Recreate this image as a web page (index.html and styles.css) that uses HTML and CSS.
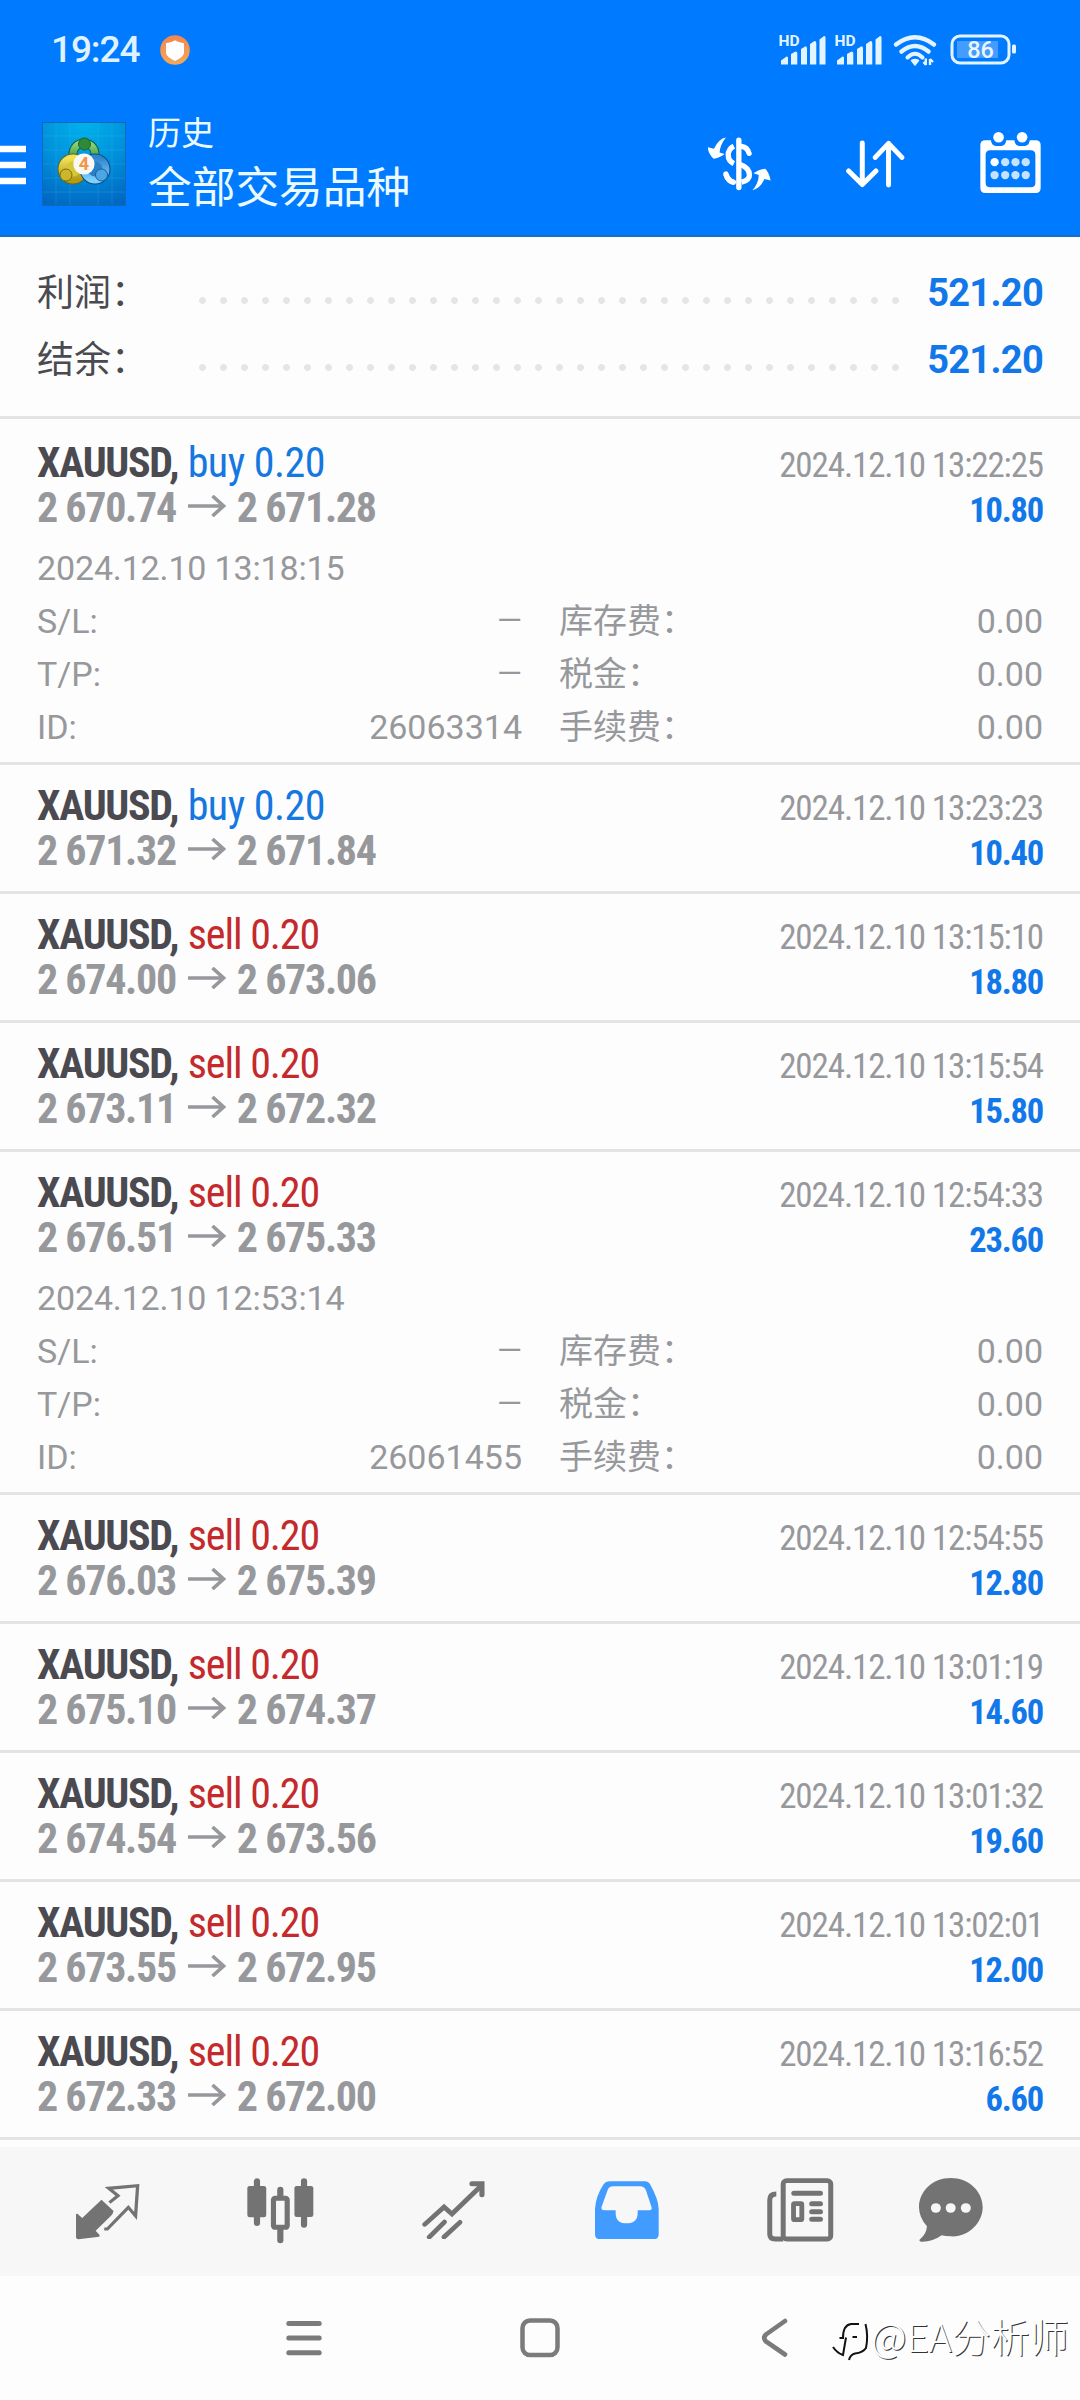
FILE: index.html
```html
<!DOCTYPE html>
<html lang="zh-CN">
<head>
<meta charset="utf-8">
<title>历史</title>
<link rel="stylesheet" href="styles.css">
</head>
<body>
<svg class="defs" aria-hidden="true">
  <symbol id="arrow" viewBox="0 0 38 22">
    <path d="M0 11H35M24.5 1L35.5 11L24.5 21" fill="none" stroke="currentColor" stroke-width="3.6"/>
  </symbol>
</svg>
<div class="screen">
  <header class="header">
    <div class="status">
      <span class="clock">19:24</span>
      <svg class="shield" viewBox="0 0 30 30">
        <defs><linearGradient id="og" x1="0" y1="0" x2="0" y2="1"><stop offset="0" stop-color="#f4854e"/><stop offset="1" stop-color="#f2a95a"/></linearGradient></defs>
        <circle cx="15" cy="15" r="14.8" fill="url(#og)"/>
        <path d="M15 5.2Q19 8 24 8.2V18Q23.500 22 15 26Q6.500 22 6 18V8.200Q11 8 15 5.200Z" fill="#fff"/>
      </svg>
      <svg class="indicators" viewBox="0 0 240 36">
        <g fill="#e3f4ff">
          <g id="sig">
            <text x="-.5" y="13.600" font-size="15.500" font-weight="700">HD</text>
            <path d="M2 28.500L7.500 24.500Q9 24.200 9 26V32.500H2ZM12 22L16.500 19.500Q18.300 19.500 18.300 21V32.500H12ZM22 17L26.500 14.200Q28 14.200 28 16V32.500H22ZM31 12L35.500 9Q37.300 9 37.300 11V32.500H31ZM40.500 7.500L45 4Q46.500 3.800 46.500 5.500V32.500H40.500Z"/>
          </g>
          <use href="#sig" x="56"/>
          <path d="M132.500 28.500Q136 26.500 139.500 28.500L136 33Z" stroke="#e3f4ff" stroke-width="1.500" stroke-linejoin="round"/>
          <path d="M146.800 26.500V33M144.500 30L147 33M151 33V27M151 27L154 30" fill="none" stroke="#e3f4ff" stroke-width="2.400"/>
          <rect x="178" y="9" width="41" height="17" fill="#459cff"/>
        </g>
        <g fill="none" stroke="#e3f4ff" stroke-width="4.500" stroke-linecap="round">
          <path d="M117 12.500Q136 -2 155 12.500M122.500 19.500Q136 8.500 149.500 19.500"/>
          <path d="M128.500 25.500Q136 18 143.500 25.500" stroke-width="4"/>
        </g>
        <rect x="173" y="4" width="57" height="27" rx="8" fill="none" stroke="#e3f4ff" stroke-width="3"/>
        <rect x="233" y="12.500" width="4" height="9" rx="1.500" fill="#e3f4ff"/>
        <text x="201.500" y="26" text-anchor="middle" font-size="23.500" font-weight="500" fill="#e9f6ff">86</text>
      </svg>
    </div>
    <div class="toolbar">
      <svg class="menu" viewBox="0 0 27 40"><path d="M0 4H26M0 20H26M0 36H26" stroke="#fff" stroke-width="6.600"/></svg>
      <svg class="logo" viewBox="0 0 84 84">
        <defs>
          <radialGradient id="bg" cx=".5" cy="0" r="1.050"><stop offset="0" stop-color="#00b2ec"/><stop offset=".5" stop-color="#0092dc"/><stop offset="1" stop-color="#0067c2"/></radialGradient>
          <linearGradient id="gr" x1="0" y1="0" x2="0" y2="1"><stop offset="0" stop-color="#8ed47a"/><stop offset="1" stop-color="#1d7f2c"/></linearGradient>
          <linearGradient id="ye" x1="0" y1="0" x2="0" y2="1"><stop offset="0" stop-color="#f1e25a"/><stop offset="1" stop-color="#b59a14"/></linearGradient>
          <linearGradient id="bl" x1="0" y1="0" x2="0" y2="1"><stop offset="0" stop-color="#2f86cc"/><stop offset="1" stop-color="#7fd0ff"/></linearGradient>
        </defs>
        <rect width="84" height="84" fill="url(#bg)"/>
        <path d="M14 0V84M28 0V84M56 0V84M70 0V84M0 14H84M0 28H84M0 42H84M0 56H84M0 70H84" stroke="#5cc8f5" stroke-opacity=".18"/>
        <rect x=".5" y=".5" width="83" height="83" fill="none" stroke="#1268b5"/>
        <circle cx="42" cy="32" r="11" fill="none" stroke="#145c3a" stroke-width="9"/>
        <circle cx="42" cy="32" r="11" fill="none" stroke="url(#gr)" stroke-width="7"/>
        <circle cx="31" cy="47" r="11" fill="none" stroke="#5d6a20" stroke-width="9"/>
        <circle cx="31" cy="47" r="11" fill="#d8c63a" stroke="url(#ye)" stroke-width="7"/>
        <circle cx="53" cy="47" r="11" fill="none" stroke="#0b4a86" stroke-width="9"/>
        <circle cx="53" cy="47" r="11" fill="#2a80c4" stroke="url(#bl)" stroke-width="7"/>
        <circle cx="42.500" cy="22" r="6" fill="#2e8a38" stroke="#1a6330"/>
        <circle cx="24" cy="53" r="6" fill="#cdb62a" stroke="#776c18"/>
        <circle cx="59.500" cy="53" r="6" fill="#4ba6e2" stroke="#1a5f9f"/>
        <circle cx="42" cy="42" r="10.600" fill="#f8f8f5"/>
        <text x="42" y="48.300" text-anchor="middle" font-size="18" font-weight="700" fill="#f29545">4</text>
      </svg>
      <div class="titles"><span class="title">历史</span><span class="subtitle">全部交易品种</span></div>
      <svg class="act-dollar" viewBox="145 410 190 162">
        <g fill="none" stroke="#fff" stroke-width="16" stroke-linecap="round">
          <path d="M238 419V562"/>
          <path d="M223 437Q206 446 206 464Q206 482 223 490M199 522Q205 542 223 546" stroke-linecap="butt"/>
          <path d="M246 438Q264 441 269 459M199 521Q205 542 222 546"/>
          <path d="M240 492Q270 502 270 524Q270 540 246 546" stroke-linecap="butt"/>
        </g>
        <path d="M199 411Q178 414 163 445L144 440Q146 462 162 475Q178 474 195 461L180 456Q182 432 199 411ZM279 570Q298 548 298 524L282 519Q300 506 318 505Q330 518 334 541L315 536Q304 564 279 570Z" fill="#fff"/>
      </svg>
      <svg class="act-sort" viewBox="558 418 176 144">
        <path d="M607 427V552M566 511L607 552L648 511M686 553V428M646 470L686 428L726 470" fill="none" stroke="#fff" stroke-width="15" stroke-linecap="round" stroke-linejoin="round"/>
      </svg>
      <svg class="act-cal" viewBox="960 395 182 184">
        <path fill="#fff" fill-rule="evenodd" d="M975 420H992Q993 435 1006 437H1024Q1037 435 1038 420H1063Q1064 435 1077 437H1095Q1108 435 1109 420H1127Q1142 420 1142 435V563Q1142 579 1127 579H975Q960 579 960 563V435Q960 420 975 420ZM990 450Q976 450 976 464V548Q976 562 990 562H1112Q1126 562 1126 548V464Q1126 450 1112 450Z"/>
        <circle cx="1015" cy="411" r="16" fill="#fff"/><circle cx="1086" cy="411" r="16" fill="#fff"/>
        <circle cx="1003" cy="486" r="12.500" fill="#fff"/>
        <g fill="#c5e2ff"><circle cx="1035" cy="486" r="12.500"/><circle cx="1066" cy="486" r="12.500"/><circle cx="1097" cy="486" r="12.500"/><circle cx="1003" cy="525" r="12.500"/><circle cx="1035" cy="525" r="12.500"/><circle cx="1066" cy="525" r="12.500"/><circle cx="1097" cy="525" r="12.500"/></g>
      </svg>
    </div>
  </header>

  <section class="summary">
    <div class="sum-row"><span class="sum-label">利润：</span><span class="dots"></span><span class="sum-value">521.20</span></div>
    <div class="sum-row"><span class="sum-label">结余：</span><span class="dots"></span><span class="sum-value">521.20</span></div>
  </section>

  <main class="deals">
    <article class="deal first">
      <div class="line"><span class="symbol">XAUUSD, <span class="buy">buy 0.20</span></span><time class="time">2024.12.10 13:22:25</time></div>
      <div class="line"><span class="price">2 670.74<svg class="arr"><use href="#arrow"/></svg>2 671.28</span><span class="profit">10.80</span></div>
      <div class="detail">
        <div class="opened">2024.12.10 13:18:15</div>
        <span>S/L:</span><span class="num none">—</span><span class="fee">库存费：</span><span class="num">0.00</span>
        <span>T/P:</span><span class="num none">—</span><span class="fee">税金：</span><span class="num">0.00</span>
        <span>ID:</span><span class="num">26063314</span><span class="fee">手续费：</span><span class="num">0.00</span>
      </div>
    </article>
    <article class="deal">
      <div class="line"><span class="symbol">XAUUSD, <span class="buy">buy 0.20</span></span><time class="time">2024.12.10 13:23:23</time></div>
      <div class="line"><span class="price">2 671.32<svg class="arr"><use href="#arrow"/></svg>2 671.84</span><span class="profit">10.40</span></div>
    </article>
    <article class="deal">
      <div class="line"><span class="symbol">XAUUSD, <span class="sell">sell 0.20</span></span><time class="time">2024.12.10 13:15:10</time></div>
      <div class="line"><span class="price">2 674.00<svg class="arr"><use href="#arrow"/></svg>2 673.06</span><span class="profit">18.80</span></div>
    </article>
    <article class="deal">
      <div class="line"><span class="symbol">XAUUSD, <span class="sell">sell 0.20</span></span><time class="time">2024.12.10 13:15:54</time></div>
      <div class="line"><span class="price">2 673.11<svg class="arr"><use href="#arrow"/></svg>2 672.32</span><span class="profit">15.80</span></div>
    </article>
    <article class="deal">
      <div class="line"><span class="symbol">XAUUSD, <span class="sell">sell 0.20</span></span><time class="time">2024.12.10 12:54:33</time></div>
      <div class="line"><span class="price">2 676.51<svg class="arr"><use href="#arrow"/></svg>2 675.33</span><span class="profit">23.60</span></div>
      <div class="detail">
        <div class="opened">2024.12.10 12:53:14</div>
        <span>S/L:</span><span class="num none">—</span><span class="fee">库存费：</span><span class="num">0.00</span>
        <span>T/P:</span><span class="num none">—</span><span class="fee">税金：</span><span class="num">0.00</span>
        <span>ID:</span><span class="num">26061455</span><span class="fee">手续费：</span><span class="num">0.00</span>
      </div>
    </article>
    <article class="deal">
      <div class="line"><span class="symbol">XAUUSD, <span class="sell">sell 0.20</span></span><time class="time">2024.12.10 12:54:55</time></div>
      <div class="line"><span class="price">2 676.03<svg class="arr"><use href="#arrow"/></svg>2 675.39</span><span class="profit">12.80</span></div>
    </article>
    <article class="deal">
      <div class="line"><span class="symbol">XAUUSD, <span class="sell">sell 0.20</span></span><time class="time">2024.12.10 13:01:19</time></div>
      <div class="line"><span class="price">2 675.10<svg class="arr"><use href="#arrow"/></svg>2 674.37</span><span class="profit">14.60</span></div>
    </article>
    <article class="deal">
      <div class="line"><span class="symbol">XAUUSD, <span class="sell">sell 0.20</span></span><time class="time">2024.12.10 13:01:32</time></div>
      <div class="line"><span class="price">2 674.54<svg class="arr"><use href="#arrow"/></svg>2 673.56</span><span class="profit">19.60</span></div>
    </article>
    <article class="deal">
      <div class="line"><span class="symbol">XAUUSD, <span class="sell">sell 0.20</span></span><time class="time">2024.12.10 13:02:01</time></div>
      <div class="line"><span class="price">2 673.55<svg class="arr"><use href="#arrow"/></svg>2 672.95</span><span class="profit">12.00</span></div>
    </article>
    <article class="deal">
      <div class="line"><span class="symbol">XAUUSD, <span class="sell">sell 0.20</span></span><time class="time">2024.12.10 13:16:52</time></div>
      <div class="line"><span class="price">2 672.33<svg class="arr"><use href="#arrow"/></svg>2 672.00</span><span class="profit">6.60</span></div>
    </article>
  </main>

  <nav class="tabs">
    <svg class="tab-quotes" viewBox="218 188 190 172" preserveAspectRatio="none">
      <path d="M295 238L330 272Q329 280 322 287L278 331L290 345L288 349L228 357Q221 357 221 350V281L225 280L239 293Z" fill="#737373"/>
      <path d="M318 247L343 226L316 204L400 196L394 287L373 261L312 326H303" fill="none" stroke="#737373" stroke-width="9.500"/>
    </svg>
    <svg class="tab-chart" viewBox="716 174 195 197" preserveAspectRatio="none">
      <g fill="#737373"><rect x="717" y="198" width="55" height="94" rx="7"/><rect x="736" y="175" width="18" height="143" rx="9"/><rect x="854" y="198" width="55" height="93" rx="7"/><rect x="873" y="175" width="18" height="148" rx="9"/><rect x="804" y="200" width="18" height="40" rx="9"/><rect x="804" y="320" width="18" height="50" rx="9"/></g>
      <rect x="793" y="235" width="40" height="87" rx="5" fill="none" stroke="#737373" stroke-width="15"/>
    </svg>
    <svg class="tab-trade" viewBox="1224 182 184 176" preserveAspectRatio="none">
      <path d="M1232 312L1288 260L1311 281L1395 197M1245 350L1289 305M1288 350L1334 306" fill="none" stroke="#737373" stroke-width="14" stroke-linecap="round"/>
      <path d="M1369 190H1398V223" fill="none" stroke="#737373" stroke-width="15" stroke-linecap="round"/>
    </svg>
    <svg class="tab-history" viewBox="161 182 185 176" preserveAspectRatio="none">
      <path fill="#429bff" fill-rule="evenodd" d="M202 183H306Q316 183 321 192Q345 236 346 265V341Q346 357 331 357H176Q161 357 161 341V265Q163 228 186 192Q192 183 202 183ZM214 198Q202 198 198 208L180 260Q178 270 187 270H221V278Q221 309 252 309Q285 309 285 278V270H320Q328 270 325 260L309 210Q304 198 292 198Z"/>
    </svg>
    <svg class="tab-news" viewBox="663 174 193 192" preserveAspectRatio="none">
      <g fill="none" stroke="#737373" stroke-width="14.500"><rect x="710" y="182" width="138" height="175" rx="10"/><path d="M690 222Q671 222 671 240V343Q671 357 687 357H710"/></g>
      <path d="M741 220H818M793 251H818M793 275H818M793 298H818" stroke="#737373" stroke-width="15" stroke-linecap="round"/>
      <rect x="740" y="251" width="24" height="48" rx="3" fill="none" stroke="#737373" stroke-width="14"/>
    </svg>
    <svg class="tab-chat" viewBox="1101 174 185 192" preserveAspectRatio="none">
      <path fill="#737373" d="M1193 174C1246 174 1286 214 1286 262C1286 310 1242 353 1193 349Q1178 349 1167 346Q1140 366 1108 365Q1099 363 1104 358Q1123 342 1124 319Q1101 292 1101 262C1101 214 1140 174 1193 174Z"/>
      <g fill="#f7f7f7"><circle cx="1150" cy="264" r="14.500"/><circle cx="1193" cy="264" r="14.500"/><circle cx="1237" cy="264" r="14.500"/></g>
    </svg>
  </nav>

  <footer class="sysnav">
    <svg class="sys" viewBox="0 0 40 40"><path d="M4.800 5.500H35.200M4.800 20H35.200M4.800 34.700H35.200" stroke="#7b7b7b" stroke-width="5" stroke-linecap="round"/></svg>
    <svg class="sys" viewBox="0 0 40 40"><rect x="2.500" y="2.500" width="35" height="34.500" rx="7.500" fill="none" stroke="#7b7b7b" stroke-width="4.500"/></svg>
    <svg class="sys" viewBox="0 0 40 40"><path d="M29 3L10 16.500Q6.500 20 10 23.500L29 36.500" fill="none" stroke="#7b7b7b" stroke-width="4.600" stroke-linecap="round"/></svg>
    <div class="watermark">
      <svg viewBox="0 0 38 44">
        <g fill="none">
          <path d="M7.500 23H11Q11 10 19 9H27M14 22.500L11 40Q5 38 1 32M20.500 22H25" stroke="#111" stroke-width="2"/>
          <path d="M33.500 9Q36.500 21 34 33Q31 37.500 23 38.500Q18 40 17 45" stroke="#111" stroke-width="2"/>
        </g>
      </svg>
      <span>@EA分析师</span>
    </div>
  </footer>
</div>
</body>
</html>
```
FILE: styles.css
```css
* { box-sizing: border-box; }
body { margin: 0; background: #fff; font-family: Roboto, "Noto Sans CJK SC", sans-serif; }
svg { display: block; flex: none; }
.defs { position: absolute; width: 0; height: 0; }
.screen { width: 1080px; height: 2400px; display: flex; flex-direction: column; background: #fdfdfd; overflow: hidden; position: relative; }

.header { height: 237px; flex: none; background: #007aff; border-bottom: 2px solid #1a6fc4; color: #fff; }
.status { height: 100px; display: flex; align-items: center; padding-left: 51px; }
.clock { width: 109px; font-size: 37px; font-weight: 500; line-height: 100px; letter-spacing: -1.100px; color: #dff2ff; }
.shield { width: 30px; height: 30px; }
.indicators { width: 240px; height: 36px; margin-left: 589px; overflow: visible; }
.toolbar { height: 135px; display: flex; align-items: center; }
.menu { width: 27px; height: 40px; margin-top: -5px; }
.logo { width: 84px; height: 84px; margin: -8px 0 0 15px; }
.titles { display: flex; flex-direction: column; width: 582px; padding-left: 22px; margin-top: -8px; color: #eafaff; }
.title { font-size: 33px; line-height: 48px; }
.subtitle { font-size: 43.700px; line-height: 60px; }
.act-dollar { width: 63px; height: 54px; margin: -8px 0 0 0; }
.act-sort { width: 58.500px; height: 48px; margin: -8px 0 0 75px; }
.act-cal { width: 61px; height: 61px; margin: -10px 0 0 75px; }

.summary { height: 179px; flex: none; padding: 22px 37px 0; }
.sum-row { height: 67px; display: flex; align-items: center; color: #4a4a50; }
.sum-label { width: 162px; font-size: 37px; margin-top: -6px; }
.dots { width: 714px; height: 7px; margin: 16px 0 0 -.5px; background: radial-gradient(circle at 3.500px 3.500px, #e5e5e5 3px, transparent 3.800px) 0 0 / 21px 7px; }
.sum-value { flex: 1; text-align: right; font-size: 38px; font-weight: 700; color: #1278ea; letter-spacing: -.7px; }

.deals { height: 1731px; flex: none; border-top: 3px solid #e4e4e4; color: #97989c; }
.deal { padding: 18px 37px; border-bottom: 3px solid #e4e4e4; }
.deal.first { padding-top: 21px; }
.deal:has(.detail) { padding-bottom: 8px; }
.line { height: 45px; display: flex; justify-content: space-between; align-items: baseline; line-height: 45px; font-family: "Roboto Condensed", Roboto, sans-serif; }
.symbol, .price { font-size: 42px; font-weight: 700; letter-spacing: -1.300px; white-space: pre; }
.symbol { color: #4a4a50; }
.buy, .sell { margin-left: 1px; font-weight: 400; color: #1577e0; letter-spacing: -.5px; }
.sell { color: #c42a2c; letter-spacing: -1.050px; }
.arr { display: inline-block; width: 38px; height: 22px; margin: 0 11px 0 12px; vertical-align: 5px; overflow: visible; }
.time { font-size: 35px; letter-spacing: -1.100px; }
.profit { font-size: 34.500px; font-weight: 700; color: #1278ea; letter-spacing: -1.200px; }
.detail { margin-top: 12px; display: grid; grid-template-columns: 120px 365px 1fr 1fr; grid-auto-rows: 53px; line-height: 53px; font-size: 34px; }
.opened { grid-column: 1 / -1; letter-spacing: -.150px; }
.num { text-align: right; }
.none { font-size: 32px; line-height: 50px; }
.fee { padding-left: 37px; white-space: nowrap; line-height: 52px; }

.tabs { height: 129px; flex: none; background: #f7f7f7; display: grid; grid-template-columns: repeat(5, 173.300px) 128px; padding-left: 20.800px; justify-items: center; align-items: start; }
.tab-quotes { width: 65.400px; height: 57.300px; margin-top: 35.500px; }
.tab-chart { width: 67px; height: 65.700px; margin-top: 31px; }
.tab-trade { width: 63.400px; height: 58.700px; margin-top: 33.500px; }
.tab-history { width: 63.700px; height: 58.700px; margin-top: 33.500px; }
.tab-news { width: 66.500px; height: 64px; margin-top: 31px; }
.tab-chat { width: 63.700px; height: 64px; margin-top: 31px; }

.sysnav { height: 124px; background: #fdfdfd; display: grid; grid-template-columns: 236px 236px 236px; justify-content: center; justify-items: center; padding-top: 42px; }
.sys { width: 40px; height: 40px; }
.watermark { position: absolute; left: 832px; top: 2308px; display: flex; align-items: center; color: #fff; font-family: "Noto Sans CJK SC", sans-serif; font-size: 39px; font-weight: 300; line-height: 54px; text-shadow: 1px 1px 0 #333; white-space: nowrap; }
.watermark svg { width: 38px; height: 44px; margin-right: 1px; margin-top: 4px; overflow: visible; }
```
